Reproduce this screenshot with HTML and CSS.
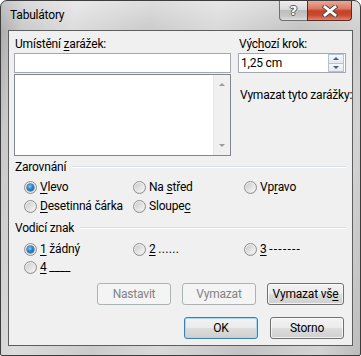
FILE: index.html
```html
<!DOCTYPE html>
<html lang="cs">
<head>
<meta charset="utf-8">
<title>Tabulátory</title>
<link rel="stylesheet" href="styles.css">
</head>
<body>
<div class="window">
  <div class="titlebar">
    <span class="title">Tabulátory</span>
    <div class="caption-btns">
      <div class="cap-help"><span>?</span></div>
      <div class="cap-close">
        <svg width="16" height="12" viewBox="0 0 16 12">
          <path d="M3 2 L13 10 M13 2 L3 10" stroke="#4a4a4a" stroke-width="4.6" stroke-linecap="square"/>
          <path d="M3 2 L13 10 M13 2 L3 10" stroke="#ffffff" stroke-width="2.8" stroke-linecap="square"/>
        </svg>
      </div>
    </div>
  </div>
  <div class="client">
    <div class="top">
      <div class="col-left">
        <div class="lbl">Umístění <u>z</u>arážek:</div>
        <div class="textbox"></div>
        <div class="listbox">
          <div class="list-area"></div>
          <div class="vscroll">
            <span class="arr arr-up"></span>
            <span class="arr arr-down"></span>
          </div>
        </div>
      </div>
      <div class="col-right">
        <div class="lbl">Výc<u>h</u>ozí krok:</div>
        <div class="spinbox">
          <span class="spin-val">1,25 cm</span>
          <div class="spin-btns">
            <div class="spin-btn"><span class="sarr sarr-up"></span></div>
            <div class="spin-btn"><span class="sarr sarr-down"></span></div>
          </div>
        </div>
        <div class="lbl lbl-clear">Vymazat tyto zarážky:</div>
      </div>
    </div>

    <div class="group-head"><span>Zarovnání</span><i class="rule"></i></div>
    <div class="radio-grid">
      <label class="radio"><span class="rb checked"></span><span><u>V</u>levo</span></label>
      <label class="radio"><span class="rb"></span><span>Na <u>s</u>třed</span></label>
      <label class="radio"><span class="rb"></span><span>Vp<u>r</u>avo</span></label>
      <label class="radio"><span class="rb"></span><span><u>D</u>esetinná čárka</span></label>
      <label class="radio"><span class="rb"></span><span>Sloupe<u>c</u></span></label>
    </div>

    <div class="group-head group-head2"><span>Vodicí znak</span><i class="rule"></i></div>
    <div class="radio-grid radio-grid2">
      <label class="radio"><span class="rb checked"></span><span><u>1</u> žádný</span></label>
      <label class="radio"><span class="rb"></span><span><u>2</u> <span class="dots">......</span></span></label>
      <label class="radio"><span class="rb"></span><span><u>3</u> <span class="dashes">-------</span></span></label>
      <label class="radio"><span class="rb"></span><span><u>4</u> ____</span></label>
    </div>

    <div class="btn-row btn-row1">
      <div class="btn disabled">Nastavit</div>
      <div class="btn disabled">Vymazat</div>
      <div class="btn wide">Vymazat vš<u>e</u></div>
    </div>
    <div class="btn-row btn-row2">
      <div class="btn default">OK</div>
      <div class="btn">Storno</div>
    </div>
  </div>
</div>
</body>
</html>
```

FILE: styles.css
```css
* { box-sizing: border-box; }

html, body {
  margin: 0;
  padding: 0;
  background: #ffffff;
}

body {
  font-family: Roboto, "Noto Sans", sans-serif;
  font-size: 12px;
  letter-spacing: -0.2px;
  color: #000;
}

u { text-decoration: underline; text-underline-offset: 2px; text-decoration-thickness: 1px; }

.window {
  width: 361px;
  height: 356px;
  border: 1px solid #3d3d3d;
  border-radius: 7px 7px 2px 2px;
  padding: 0 7px 9px 7px;
  background:
    linear-gradient(to bottom, rgba(255,255,255,0.35), rgba(255,255,255,0) 30px),
    linear-gradient(100deg, #a6a6a6 0%, #c9c9c9 6%, #dcdcdc 18%, #cbcbcb 36%, #d9d9d9 52%, #c3c3c3 72%, #d3d3d3 90%, #bcbcbc 100%);
  display: flex;
  flex-direction: column;
}

.titlebar {
  height: 29px;
  display: flex;
  align-items: flex-start;
  justify-content: space-between;
  margin: 0 1px 0 2px;
}

.title {
  padding-top: 6px;
  line-height: 16px;
  color: #000;
}

.caption-btns {
  display: flex;
  height: 20px;
}

.cap-help {
  width: 28px;
  height: 20px;
  border: 1px solid #6f6f6f;
  border-top: none;
  border-right: none;
  border-radius: 0 0 0 4px;
  background: linear-gradient(to bottom, #eeeeee 0%, #d9d9d9 45%, #bdbdbd 50%, #c7c7c7 80%, #dedede 100%);
  display: flex;
  align-items: center;
  justify-content: center;
}

.cap-help span {
  font-family: "DejaVu Sans", sans-serif;
  font-weight: bold;
  font-size: 13px;
  line-height: 13px;
  letter-spacing: 0;
  color: #ffffff;
  text-shadow: 1px 0 0 #555, -1px 0 0 #555, 0 1px 0 #555, 0 -1px 0 #555;
}

.cap-close {
  width: 45px;
  height: 20px;
  border: 1px solid #5b2a20;
  border-top: none;
  border-radius: 0 0 4px 0;
  background: linear-gradient(to bottom, #e9a999 0%, #dc7a62 40%, #c5422a 52%, #c94a31 75%, #e1846b 100%);
  display: flex;
  align-items: center;
  justify-content: center;
}

.client {
  flex: 1;
  border: 1px solid #5e5e5e;
  background: #f0f0f0;
  padding: 5px 7px 0 5px;
  display: flex;
  flex-direction: column;
}

.top {
  display: flex;
  justify-content: space-between;
}

.col-left { width: 217px; }
.col-right { width: 108px; margin-right: -1px; }

.lbl {
  line-height: 16px;
  height: 17px;
  padding-left: 1px;
  white-space: nowrap;
}

.textbox {
  height: 20px;
  background: #fff;
  border: 1px solid #a5a7ae;
}

.listbox {
  margin-top: 1px;
  height: 82px;
  border: 1px solid #82868f;
  background: #fff;
  display: flex;
}

.list-area { flex: 1; }

.vscroll {
  width: 17px;
  background: #f0f0f0;
  border-left: 1px solid #e6e6e6;
  display: flex;
  flex-direction: column;
  justify-content: space-between;
  align-items: center;
  padding: 8px 0 8px 0;
}

.arr {
  width: 0;
  height: 0;
  border-left: 3px solid transparent;
  border-right: 3px solid transparent;
}
.arr-up { border-bottom: 3px solid #9a9a9a; }
.arr-down { border-top: 3px solid #9a9a9a; }

.spinbox {
  height: 20px;
  background: #fff;
  border: 1px solid #a5a7ae;
  display: flex;
  align-items: center;
  justify-content: space-between;
}

.spin-val {
  padding-left: 2px;
  line-height: 16px;
}

.spin-btns {
  width: 16px;
  height: 18px;
  display: flex;
  flex-direction: column;
  margin-right: 1px;
}

.spin-btn {
  flex: 1;
  border: 1px solid #b4c3d3;
  background: linear-gradient(to bottom, #f6f8fa, #e3e9ef);
  display: flex;
  align-items: center;
  justify-content: center;
}
.spin-btn + .spin-btn { border-top: none; }

.sarr {
  width: 0;
  height: 0;
  border-left: 3px solid transparent;
  border-right: 3px solid transparent;
}
.sarr-up { border-bottom: 3px solid #4a5f78; }
.sarr-down { border-top: 3px solid #4a5f78; }

.lbl-clear {
  margin-top: 14px;
  margin-left: 1px;
}

.group-head {
  display: flex;
  align-items: center;
  margin-top: 3px;
  height: 16px;
  line-height: 16px;
}
.group-head2 { margin-top: 6px; }

.group-head span { padding-right: 6px; padding-left: 1px; }

.rule {
  flex: 1;
  height: 1px;
  background: #d8dfe5;
  border-bottom: 1px solid #ffffff;
  box-sizing: content-box;
  margin-right: -1px;
}

.radio-grid {
  display: grid;
  grid-template-columns: 109px 111px 1fr;
  padding-left: 10px;
  margin-top: 4px;
  row-gap: 3px;
}

.radio-grid2 {
  margin-top: 5px;
  row-gap: 2px;
}

.radio {
  display: flex;
  align-items: center;
  height: 16px;
  line-height: 16px;
  white-space: nowrap;
}

.dots { letter-spacing: 0.3px; }
.dashes { letter-spacing: 1.2px; }

.rb {
  width: 13px;
  height: 13px;
  border-radius: 50%;
  border: 1px solid #8e8f8f;
  background: radial-gradient(circle at 50% 40%, #ffffff 0%, #f0f0f0 45%, #d4d4d4 100%);
  margin-right: 3px;
  position: relative;
  flex: none;
}

.rb::before {
  content: "";
  position: absolute;
  left: 1px; top: 1px; right: 1px; bottom: 1px;
  border-radius: 50%;
  background: linear-gradient(135deg, #cbcbcb, #f7f7f7);
}

.rb.checked::after {
  content: "";
  position: absolute;
  left: 2px; top: 2px;
  width: 7px; height: 7px;
  border-radius: 50%;
  background: radial-gradient(circle at 40% 35%, #8cd0f5 0%, #2a8ad3 40%, #10508a 100%);
  box-shadow: 0 0 0 0.5px #1f4f7a;
}

.btn-row {
  display: flex;
  justify-content: flex-end;
  padding-right: 1px;
}

.btn-row1 { margin-top: 8px; gap: 11px; }
.btn-row2 { margin-top: 12px; gap: 12px; }

.btn {
  width: 74px;
  height: 22px;
  border: 1px solid #707070;
  border-radius: 3px;
  background: linear-gradient(to bottom, #f2f2f2 0%, #ebebeb 49%, #dddddd 51%, #cfcfcf 100%);
  box-shadow: inset 0 0 0 1px rgba(255,255,255,0.7);
  display: flex;
  align-items: center;
  justify-content: center;
  line-height: 16px;
  white-space: nowrap;
}

.btn.wide { width: 77px; }

.btn.disabled {
  border-color: #adb2b5;
  background: #f4f4f4;
  box-shadow: none;
  color: #838383;
}

.btn.default {
  border-color: #3c7fb1;
  box-shadow: inset 0 0 0 1px #a5d8f4;
}
```
